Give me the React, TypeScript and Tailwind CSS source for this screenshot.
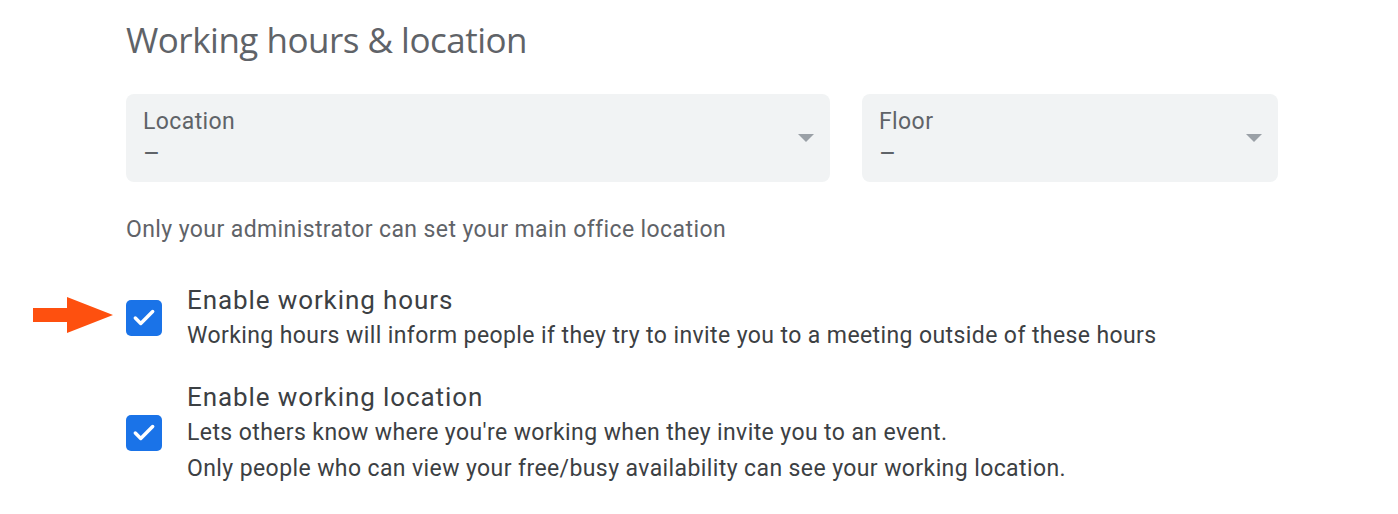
import { Check } from 'lucide-react';

function Select({ label, width }: { label: string; width: string }) {
    return (
        <div className={`relative h-[88px] ${width} rounded-lg bg-[#f1f3f4] px-[17px] pt-[12px]`}>
            <p className="text-[23px] leading-[32px] tracking-[0.4px] text-[#5f6368]">{label}</p>
            <p className="text-[26px] leading-[30px] text-[#5f6368]">–</p>
            <svg
                className="absolute right-[16px] top-[40px]"
                width="16"
                height="8"
                viewBox="0 0 16 8"
            >
                <path d="M0 0h16L8 8z" fill="#9aa0a6" />
            </svg>
        </div>
    );
}

function CheckRow({
    title,
    lines,
    pointed,
}: {
    title: string;
    lines: string[];
    pointed?: boolean;
}) {
    return (
        <div className="flex items-center gap-[25px]">
            <div className="relative h-[36px] w-[36px] flex-shrink-0">
                <div className="flex h-full w-full items-center justify-center rounded-[5px] bg-[#1a73e8]">
                    <Check className="h-[26px] w-[26px] text-white" strokeWidth={3.2} />
                </div>
                {pointed && (
                    <svg
                        className="absolute left-[-93px] top-[-3px]"
                        width="80"
                        height="36"
                        viewBox="0 0 80 36"
                    >
                        <path d="M0 11h34V0l46 18-46 18V25H0z" fill="#fe500f" />
                    </svg>
                )}
            </div>
            <div>
                <p className="text-[26px] leading-[36px] tracking-[0.9px] text-[#3c4043]">{title}</p>
                {lines.map((l) => (
                    <p key={l} className="text-[23px] leading-[36px] tracking-[0.4px] text-[#3c4043]">
                        {l}
                    </p>
                ))}
            </div>
        </div>
    );
}

export default function App() {
    return (
        <div className="min-h-[514px] w-[1398px] bg-white pl-[126px] pt-[16px] font-['Roboto',sans-serif]">
            <h1 className="text-[35px] leading-[48px] text-[#5f6368] font-['Open_Sans',sans-serif] tracking-[-0.5px]">
                Working hours &amp; location
            </h1>

            <div className="mt-[30px] flex gap-[32px]">
                <Select label="Location" width="w-[704px]" />
                <Select label="Floor" width="w-[416px]" />
            </div>

            <p className="mt-[32px] text-[23px] leading-[32px] tracking-[0.4px] text-[#5f6368]">
                Only your administrator can set your main office location
            </p>

            <div className="mt-[36px]">
                <CheckRow
                    pointed
                    title="Enable working hours"
                    lines={[
                        'Working hours will inform people if they try to invite you to a meeting outside of these hours',
                    ]}
                />
            </div>
            <div className="mt-[25px]">
                <CheckRow
                    title="Enable working location"
                    lines={[
                        "Lets others know where you're working when they invite you to an event.",
                        'Only people who can view your free/busy availability can see your working location.',
                    ]}
                />
            </div>
        </div>
    );
}
